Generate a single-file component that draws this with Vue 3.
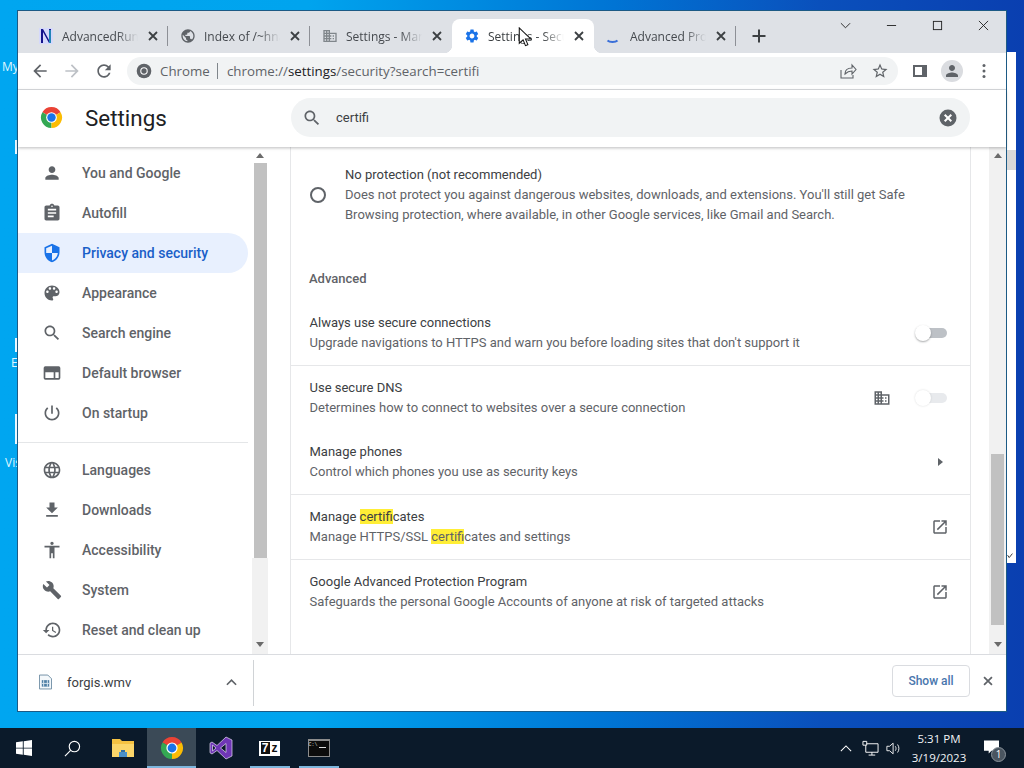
<template>
  <div class="desktop">
    <div class="desk-label label-my">My</div>
    <div class="desk-label label-e">E</div>
    <div class="desk-label label-vis">Vis</div>
    <div class="desk-mark mark-a"></div>
    <div class="desk-mark mark-b"></div>
    <div class="desk-mark mark-c"></div>
    <div class="back-window">
      <div class="back-thumb"></div>
      <svg class="back-check" viewBox="0 0 10 10"><path d="M2 4l2 3 4-5" /></svg>
    </div>

    <div class="window">
      <div class="tabstrip">
        <div class="tabs">
          <div
            v-for="(tab, i) in tabs"
            :key="i"
            :class="['tab', { 'tab--active': tab.active, 'tab--nosep': tab.nosep }]"
          >
            <svg v-if="tab.icon === 'n'" class="tab-icon" viewBox="0 0 16 16">
              <rect x="1" y="0" width="14" height="16" fill="#d5d9fb" />
              <path d="M3 15V1h2l6 11V1h2v14h-2L5 4v11z" fill="#14148c" />
              <path d="M12 2v13" stroke="#29b6c9" stroke-width="1.4" />
            </svg>
            <svg v-else-if="tab.icon === 'spin'" class="tab-icon" viewBox="0 0 16 16">
              <path d="M1.500 12.500c2 2 8 2 10 0" fill="none" stroke="#3a6fd8" stroke-width="2" />
            </svg>
            <svg v-else class="tab-icon" viewBox="0 0 24 24">
              <path :d="icons[tab.icon]" :fill="tab.color" />
            </svg>
            <span class="tab-text">{{ tab.title }}</span>
            <svg class="tab-close" viewBox="0 0 16 16"><path d="M4 4l8 8M12 4l-8 8" /></svg>
          </div>
        </div>
        <svg class="new-tab" viewBox="0 0 16 16"><path d="M8 1.500v13M1.500 8h13" /></svg>
        <div class="win-controls">
          <div class="win-btn"><svg viewBox="0 0 12 12"><path d="M1 3.500l5 5 5-5" /></svg></div>
          <div class="win-btn"><svg viewBox="0 0 12 12"><path d="M1 6h10" /></svg></div>
          <div class="win-btn"><svg viewBox="0 0 12 12"><rect x="1.500" y="1.500" width="9" height="9" /></svg></div>
          <div class="win-btn"><svg viewBox="0 0 12 12"><path d="M1 1l10 10M11 1L1 11" /></svg></div>
        </div>
      </div>

      <div class="toolbar">
        <div class="tool-btn"><svg viewBox="0 0 24 24"><path :d="icons.back" fill="#5f6368" /></svg></div>
        <div class="tool-btn"><svg viewBox="0 0 24 24"><path :d="icons.forward" fill="#bdc1c6" /></svg></div>
        <div class="tool-btn"><svg viewBox="0 0 24 24"><path :d="icons.reload" fill="#5f6368" /></svg></div>
        <div class="omnibox">
          <svg class="omni-chrome" viewBox="0 0 24 24">
            <circle cx="12" cy="12" r="11" fill="#5f6368" />
            <circle cx="12" cy="12" r="5.600" fill="#fff" />
            <circle cx="12" cy="12" r="4" fill="#5f6368" />
          </svg>
          <span class="omni-chip">Chrome</span>
          <span class="omni-sep"></span>
          <span class="omni-url">chrome://<b>settings</b>/security?search=certifi</span>
          <svg class="omni-share" viewBox="0 0 18 18">
            <path d="M2 8v8h12v-3M6 12c0-4 3-6 7-6V3l4 4.500L13 12V9c-3 0-5 1-7 3z" />
          </svg>
          <svg class="omni-star" viewBox="0 0 24 24"><path :d="icons.star" fill="#5f6368" /></svg>
        </div>
        <div class="tool-btn">
          <svg class="panel-icon" viewBox="0 0 16 16">
            <path d="M1 2h14v12H1zM3 4v8h7V4z" fill="#5f6368" fill-rule="evenodd" />
          </svg>
        </div>
        <div class="tool-btn">
          <div class="avatar">
            <svg viewBox="0 0 24 24"><path :d="icons.person" fill="#5f6368" /></svg>
          </div>
        </div>
        <div class="tool-btn">
          <svg viewBox="0 0 24 24">
            <circle cx="12" cy="5.500" r="1.800" fill="#5f6368" />
            <circle cx="12" cy="12" r="1.800" fill="#5f6368" />
            <circle cx="12" cy="18.500" r="1.800" fill="#5f6368" />
          </svg>
        </div>
      </div>

      <header class="settings-head">
        <div class="brand">
          <svg class="brand-logo" viewBox="0 0 24 24">
            <path v-for="p in chromeSectors" :key="p.d" :d="p.d" :fill="p.fill" />
            <circle cx="12" cy="12" r="5.600" fill="#fff" />
            <circle cx="12" cy="12" r="4.400" fill="#1a73e8" />
          </svg>
          <span class="brand-title">Settings</span>
        </div>
        <div class="search">
          <svg class="search-icon" viewBox="0 0 24 24"><path :d="icons.search" fill="#5f6368" /></svg>
          <span class="search-text">certifi</span>
          <svg class="search-clear" viewBox="0 0 18 18">
            <circle cx="9" cy="9" r="8.500" fill="#5f6368" />
            <path d="M5.700 5.700l6.600 6.600M12.300 5.700l-6.600 6.600" stroke="#fff" stroke-width="2" />
          </svg>
        </div>
      </header>

      <div class="body">
        <nav class="sidebar">
          <div class="nav-list">
            <template v-for="item in navItems" :key="item.label">
              <div v-if="item.divider" class="nav-divider"></div>
              <div :class="['nav-item', { 'nav-item--active': item.active }]">
                <svg class="nav-icon" viewBox="0 0 24 24">
                  <path
                    :d="icons[item.icon]"
                    :fill="item.active ? '#1a73e8' : '#5f6368'"
                    fill-rule="evenodd"
                  />
                </svg>
                <span>{{ item.label }}</span>
              </div>
            </template>
          </div>
          <div class="side-scroll">
            <svg class="arrow" viewBox="0 0 8 5"><path d="M4 0l4 5H0z" /></svg>
            <div class="side-thumb"></div>
            <svg class="arrow arrow--down" viewBox="0 0 8 5"><path d="M0 0h8L4 5z" /></svg>
          </div>
        </nav>

        <main class="content">
          <div class="card">
            <div class="radio-row">
              <div class="radio"></div>
              <div>
                <div class="row-title">No protection (not recommended)</div>
                <div class="row-sub">Does not protect you against dangerous websites, downloads, and extensions. You'll still get Safe</div>
                <div class="row-sub">Browsing protection, where available, in other Google services, like Gmail and Search.</div>
              </div>
            </div>
            <div class="section-label">Advanced</div>

            <div class="row row--line">
              <div class="row-body">
                <div class="row-title">Always use secure connections</div>
                <div class="row-sub">Upgrade navigations to HTTPS and warn you before loading sites that don't support it</div>
              </div>
              <div class="toggle"><span class="toggle-bar"></span><span class="toggle-knob"></span></div>
            </div>

            <div class="row">
              <div class="row-body">
                <div class="row-title">Use secure DNS</div>
                <div class="row-sub">Determines how to connect to websites over a secure connection</div>
              </div>
              <svg class="domain-icon" viewBox="0 0 24 24"><path :d="icons.domain" fill="#5f6368" /></svg>
              <div class="toggle toggle--off"><span class="toggle-bar"></span><span class="toggle-knob"></span></div>
            </div>

            <div class="row row--line">
              <div class="row-body">
                <div class="row-title">Manage phones</div>
                <div class="row-sub">Control which phones you use as security keys</div>
              </div>
              <svg class="row-arrow" viewBox="0 0 18 18"><path d="M7 5l5 4-5 4z" fill="#5f6368" /></svg>
            </div>

            <div class="row row--line">
              <div class="row-body">
                <div class="row-title">Manage <mark>certifi</mark>cates</div>
                <div class="row-sub">Manage HTTPS/SSL <mark>certifi</mark>cates and settings</div>
              </div>
              <svg class="row-arrow" viewBox="0 0 24 24"><path :d="icons.open" fill="#5f6368" /></svg>
            </div>

            <div class="row">
              <div class="row-body">
                <div class="row-title">Google Advanced Protection Program</div>
                <div class="row-sub">Safeguards the personal Google Accounts of anyone at risk of targeted attacks</div>
              </div>
              <svg class="row-arrow" viewBox="0 0 24 24"><path :d="icons.open" fill="#5f6368" /></svg>
            </div>
          </div>
          <div class="main-scroll">
            <svg class="arrow" viewBox="0 0 8 5"><path d="M4 0l4 5H0z" /></svg>
            <div class="main-thumb"></div>
            <svg class="arrow arrow--down" viewBox="0 0 8 5"><path d="M0 0h8L4 5z" /></svg>
          </div>
        </main>
      </div>

      <footer class="downloads">
        <div class="dl-item">
          <svg class="dl-file" viewBox="0 0 14 16">
            <path d="M.5.5h9l4 4v11H.5z" fill="#f4f8fb" stroke="#6d8ca3" />
            <rect x="3" y="6" width="8" height="7" fill="#4f7fa5" />
            <path d="M5 6v7M9 6v7M3 9.500h8" stroke="#dce9f2" />
          </svg>
          <span class="dl-name">forgis.wmv</span>
          <svg class="dl-chevron" viewBox="0 0 12 8"><path d="M1 7l5-5 5 5" /></svg>
        </div>
        <button class="show-all">Show all</button>
        <svg class="dl-close" viewBox="0 0 16 16"><path d="M3.500 3.500l9 9M12.500 3.500l-9 9" /></svg>
      </footer>
    </div>

    <div class="spacer"></div>

    <div class="taskbar">
      <div class="task-slot task-slot--narrow">
        <svg class="task-win" viewBox="0 0 16 16">
          <path d="M0 2.300l6.800-1v6.400H0zM7.700 1.200L16 0v7.700H7.700zM0 8.400h6.800v6.300L0 13.700zM7.700 8.400H16V16l-8.300-1.200z" fill="#fff" />
        </svg>
      </div>
      <div class="task-slot task-slot--narrow">
        <svg class="task-search" viewBox="0 0 18 18">
          <circle cx="11" cy="7" r="5.500" />
          <path d="M7 11l-6 6" />
        </svg>
      </div>
      <div class="task-slot task-slot--folder">
        <svg class="task-app" viewBox="0 0 24 24">
          <path d="M1 3h8l2 2h12v5H1z" fill="#f5c242" />
          <path d="M1 8h22v13H1z" fill="#fbd66a" />
          <path d="M8 21v-5h8v5z" fill="#4a90c8" />
          <path d="M10 16v-2h4v2z" fill="#2f6ea3" />
        </svg>
      </div>
      <div class="task-slot task-slot--active">
        <svg class="task-app" viewBox="0 0 24 24">
          <path v-for="p in chromeSectors" :key="p.d" :d="p.d" :fill="p.fill" />
          <circle cx="12" cy="12" r="5.600" fill="#fff" />
          <circle cx="12" cy="12" r="4.400" fill="#1a73e8" />
        </svg>
      </div>
      <div class="task-slot">
        <svg class="task-app" viewBox="0 0 24 24">
          <path d="M17 1l6 3v16l-6 3-9-8.500L3 18l-2-1.200V7.200L3 6l5 3.500zM3.500 9v6L7 12zM17 7.500L11.500 12l5.500 4.500z" fill="#6f36b5" stroke="#e6dcf5" stroke-width=".7" />
        </svg>
      </div>
      <div class="task-slot task-slot--open">
        <div class="seven-z"><span class="seven">7</span><span class="zed">z</span></div>
      </div>
      <div class="task-slot task-slot--open">
        <div class="cmd"><span class="cmd-top">C:\</span><span class="cmd-cursor"></span></div>
      </div>

      <div class="tray">
        <svg class="tray-chevron" viewBox="0 0 14 8"><path d="M1 7l6-6 6 6" /></svg>
        <svg class="tray-net" viewBox="0 0 18 16">
          <path d="M5 1H1v4h4zM5 3.500h12v9H4V5M10.500 12.500v3M7 15.500h7" />
        </svg>
        <svg class="tray-vol" viewBox="0 0 18 16">
          <path d="M1 5.500h3L8 2v12l-4-3.500H1zM10.500 5.500c1 1.500 1 3.500 0 5M13 3.500c2 2.500 2 6.500 0 9" />
        </svg>
        <div class="clock">
          <div>5:31 PM</div>
          <div>3/19/2023</div>
        </div>
        <div class="notify">
          <svg viewBox="0 0 16 14"><path d="M0 0h16v11H8l-3 3v-3H0z" fill="#fff" /></svg>
          <span class="notify-badge">1</span>
        </div>
      </div>
    </div>

    <svg class="cursor" viewBox="0 0 14 22">
      <path d="M1 1v16l4-3.500 2.500 6 2.500-1-2.500-6H13z" fill="#fff" stroke="#111" stroke-width="1.100" />
    </svg>
  </div>
</template>

<script setup>
const icons = {
  person: 'M12 12c2.210 0 4-1.790 4-4s-1.790-4-4-4-4 1.790-4 4 1.790 4 4 4zm0 2c-2.670 0-8 1.340-8 4v2h16v-2c0-2.660-5.330-4-8-4z',
  assignment: 'M19 3h-4.180C14.400 1.840 13.300 1 12 1c-1.300 0-2.400.84-2.820 2H5c-1.100 0-2 .9-2 2v14c0 1.100.9 2 2 2h14c1.100 0 2-.9 2-2V5c0-1.100-.9-2-2-2zm-7 0c.55 0 1 .45 1 1s-.45 1-1 1-1-.45-1-1 .45-1 1-1zm2 14H7v-2h7v2zm3-4H7v-2h10v2zm0-4H7V7h10v2z',
  shield: 'M12 1L3 5v6c0 5.550 3.840 10.740 9 12 5.160-1.260 9-6.450 9-12V5l-9-4zm0 10.990h7c-.53 4.120-3.280 7.790-7 8.940V12H5V6.300l7-3.110v8.800z',
  palette: 'M12 3c-4.970 0-9 4.030-9 9s4.030 9 9 9c.83 0 1.500-.67 1.500-1.500 0-.39-.15-.74-.39-1.010-.23-.26-.38-.61-.38-.99 0-.83.67-1.500 1.500-1.500H16c2.760 0 5-2.240 5-5 0-4.420-4.030-8-9-8zm-5.500 9c-.83 0-1.500-.67-1.500-1.500S5.670 9 6.500 9 8 9.670 8 10.500 7.330 12 6.500 12zm3-4C8.670 8 8 7.330 8 6.500S8.670 5 9.500 5s1.500.67 1.500 1.500S10.330 8 9.500 8zm5 0c-.83 0-1.500-.67-1.500-1.500S13.670 5 14.500 5s1.500.67 1.500 1.500S15.330 8 14.500 8zm3 4c-.83 0-1.500-.67-1.500-1.500S16.670 9 17.500 9s1.500.67 1.500 1.500-.67 1.500-1.500 1.500z',
  search: 'M15.500 14h-.79l-.28-.27C15.410 12.590 16 11.110 16 9.500 16 5.910 13.090 3 9.500 3S3 5.910 3 9.500 5.910 16 9.500 16c1.610 0 3.090-.59 4.230-1.570l.27.28v.79l5 4.990L20.490 19l-4.990-5zm-6 0C7.010 14 5 11.990 5 9.500S7.010 5 9.500 5 14 7.010 14 9.500 11.990 14 9.500 14z',
  browser: 'M20 4H4a2 2 0 0 0-2 2v12a2 2 0 0 0 2 2h16a2 2 0 0 0 2-2V6a2 2 0 0 0-2-2zM4 18v-7h10v7H4zm12 0v-7h4v7h-4z',
  power: 'M13 3h-2v10h2V3zm4.830 2.170l-1.420 1.420C17.990 7.860 19 9.810 19 12c0 3.870-3.130 7-7 7s-7-3.130-7-7c0-2.190 1.010-4.140 2.580-5.420L6.170 5.170C4.230 6.820 3 9.260 3 12c0 4.970 4.030 9 9 9s9-4.030 9-9c0-2.740-1.230-5.180-3.170-6.830z',
  language: 'M11.990 2C6.470 2 2 6.480 2 12s4.470 10 9.990 10C17.520 22 22 17.520 22 12S17.520 2 11.990 2zm6.930 6h-2.950c-.32-1.250-.78-2.450-1.380-3.560 1.840.63 3.370 1.910 4.330 3.560zM12 4.040c.83 1.200 1.480 2.530 1.910 3.960h-3.820c.43-1.430 1.080-2.760 1.910-3.960zM4.260 14C4.100 13.360 4 12.690 4 12s.1-1.360.26-2h3.380c-.08.66-.14 1.320-.14 2 0 .68.06 1.340.14 2H4.260zm.82 2h2.950c.32 1.250.78 2.450 1.380 3.560-1.840-.63-3.370-1.900-4.330-3.560zm2.950-8H5.080c.96-1.660 2.490-2.930 4.330-3.560C8.810 5.550 8.350 6.750 8.030 8zM12 19.960c-.83-1.200-1.480-2.530-1.910-3.960h3.820c-.43 1.430-1.080 2.760-1.910 3.960zM14.340 14H9.660c-.09-.66-.16-1.320-.16-2 0-.68.07-1.350.16-2h4.680c.09.65.16 1.320.16 2 0 .68-.07 1.340-.16 2zm.25 5.560c.6-1.110 1.060-2.310 1.380-3.560h2.950c-.96 1.650-2.490 2.930-4.330 3.560zM16.360 14c.08-.66.14-1.320.14-2 0-.68-.06-1.340-.14-2h3.380c.16.64.26 1.310.26 2s-.1 1.360-.26 2h-3.380z',
  download: 'M19 9h-4V3H9v6H5l7 7 7-7zM5 18v2h14v-2H5z',
  accessibility: 'M12 2c1.100 0 2 .9 2 2s-.9 2-2 2-2-.9-2-2 .9-2 2-2zm9 7h-6v13h-2v-6h-2v6H9V9H3V7h18v2z',
  build: 'M22.700 19l-9.100-9.100c.9-2.300.4-5-1.500-6.900-2-2-5-2.400-7.400-1.300L9 6 6 9 1.600 4.700C.4 7.100.9 10.100 2.900 12.100c1.900 1.900 4.600 2.400 6.900 1.500l9.100 9.100c.4.4 1 .4 1.400 0l2.300-2.300c.5-.4.5-1.100.1-1.400z',
  restore: 'M13 3c-4.970 0-9 4.030-9 9H1l3.890 3.890.07.14L9 12H6c0-3.870 3.130-7 7-7s7 3.130 7 7-3.130 7-7 7c-1.930 0-3.680-.79-4.940-2.060l-1.420 1.420C8.270 19.990 10.510 21 13 21c4.970 0 9-4.030 9-9s-4.030-9-9-9zm-1 5v5l4.280 2.540.72-1.210-3.500-2.080V8H12z',
  open: 'M19 19H5V5h7V3H5c-1.110 0-2 .9-2 2v14c0 1.100.89 2 2 2h14c1.100 0 2-.9 2-2v-7h-2v7zM14 3v2h3.590l-9.830 9.830 1.410 1.410L19 6.410V10h2V3h-7z',
  domain: 'M12 7V3H2v18h20V7H12zM6 19H4v-2h2v2zm0-4H4v-2h2v2zm0-4H4V9h2v2zm0-4H4V5h2v2zm4 12H8v-2h2v2zm0-4H8v-2h2v2zm0-4H8V9h2v2zm0-4H8V5h2v2zm10 12h-8v-2h2v-2h-2v-2h2v-2h-2V9h8v10zm-2-8h-2v2h2v-2zm0 4h-2v2h2v-2z',
  globe: 'M12 2C6.480 2 2 6.480 2 12s4.480 10 10 10 10-4.480 10-10S17.520 2 12 2zm-1 17.930c-3.950-.49-7-3.850-7-7.930 0-.62.08-1.210.21-1.790L9 15v1c0 1.100.9 2 2 2v1.930zm6.900-2.540c-.26-.81-1-1.390-1.900-1.390h-1v-3c0-.55-.45-1-1-1H8v-2h2c.55 0 1-.45 1-1V7h2c1.100 0 2-.9 2-2v-.41c2.930 1.190 5 4.060 5 7.410 0 2.080-.8 3.970-2.100 5.390z',
  gear: 'M19.140 12.940c.04-.3.06-.61.06-.94 0-.32-.02-.64-.07-.94l2.030-1.580c.18-.14.23-.41.12-.61l-1.920-3.320c-.12-.22-.37-.29-.59-.22l-2.390.96c-.5-.38-1.030-.7-1.620-.94l-.36-2.540c-.04-.24-.24-.41-.48-.41h-3.840c-.24 0-.43.17-.47.41l-.36 2.540c-.59.24-1.130.57-1.620.94l-2.390-.96c-.22-.08-.47 0-.59.22L2.740 8.870c-.12.21-.08.47.12.61l2.030 1.580c-.05.3-.09.63-.09.94s.02.64.07.94l-2.030 1.580c-.18.14-.23.41-.12.61l1.920 3.320c.12.22.37.29.59.22l2.390-.96c.5.38 1.030.7 1.620.94l.36 2.540c.05.24.24.41.48.41h3.840c.24 0 .44-.17.47-.41l.36-2.540c.59-.24 1.130-.56 1.620-.94l2.390.96c.22.08.47 0 .59-.22l1.920-3.320c.12-.22.07-.47-.12-.61l-2.010-1.580zM12 15.600c-1.980 0-3.600-1.620-3.600-3.600s1.620-3.600 3.600-3.600 3.600 1.620 3.600 3.600-1.620 3.600-3.600 3.600z',
  back: 'M20 11H7.830l5.590-5.590L12 4l-8 8 8 8 1.410-1.410L7.830 13H20v-2z',
  forward: 'M4 11h12.170l-5.590-5.590L12 4l8 8-8 8-1.410-1.410L16.170 13H4v-2z',
  reload: 'M17.650 6.350C16.200 4.900 14.210 4 12 4c-4.420 0-7.990 3.580-7.990 8s3.570 8 7.990 8c3.730 0 6.840-2.550 7.730-6h-2.080c-.82 2.330-3.040 4-5.650 4-3.310 0-6-2.690-6-6s2.690-6 6-6c1.660 0 3.140.69 4.220 1.780L13 11h7V4l-2.350 2.350z',
  star: 'M22 9.240l-7.190-.62L12 2 9.190 8.630 2 9.240l5.460 4.730L5.820 21 12 17.270 18.180 21l-1.630-7.030L22 9.240zM12 15.400l-3.760 2.270 1-4.280-3.320-2.880 4.380-.38L12 6.100l1.710 4.040 4.380.38-3.320 2.880 1 4.280L12 15.400z'
}

const chromeSectors = [
  { d: 'M12 12L2.470 6.500A11 11 0 0 1 21.530 6.500z', fill: '#ea4335' },
  { d: 'M12 12L2.470 6.500A11 11 0 0 0 12 23z', fill: '#34a853' },
  { d: 'M12 12L21.530 6.500A11 11 0 0 1 12 23z', fill: '#fbbc04' }
]

const tabs = [
  { title: 'AdvancedRun', icon: 'n' },
  { title: 'Index of /~hna', icon: 'globe', color: '#5f6368' },
  { title: 'Settings - Man', icon: 'domain', color: '#80868b', nosep: true },
  { title: 'Settings - Secu', icon: 'gear', color: '#1a73e8', active: true, nosep: true },
  { title: 'Advanced Prot', icon: 'spin' }
]

const navItems = [
  { label: 'You and Google', icon: 'person' },
  { label: 'Autofill', icon: 'assignment' },
  { label: 'Privacy and security', icon: 'shield', active: true },
  { label: 'Appearance', icon: 'palette' },
  { label: 'Search engine', icon: 'search' },
  { label: 'Default browser', icon: 'browser' },
  { label: 'On startup', icon: 'power' },
  { label: 'Languages', icon: 'language', divider: true },
  { label: 'Downloads', icon: 'download' },
  { label: 'Accessibility', icon: 'accessibility' },
  { label: 'System', icon: 'build' },
  { label: 'Reset and clean up', icon: 'restore' }
]
</script>

<style>
html, body { margin: 0; padding: 0; overflow: hidden; }
</style>

<style scoped>
.desktop {
  position: relative;
  width: 1024px; height: 768px; overflow: hidden;
  display: flex; flex-direction: column;
  background: linear-gradient(90deg, #00a6f0 0%, #00a4ee 30%, #0074d4 60%, #0a50bc 80%, #0a3fb0 100%);
  font-family: Roboto, "Liberation Sans", sans-serif;
  color: #5f6368;
}
.desk-label { position: absolute; color: #dff6ff; font: 12px "Open Sans", sans-serif; }
.label-my { left: 2px; top: 58px; }
.label-e { left: 11px; top: 354px; }
.label-vis { left: 5px; top: 454px; }
.desk-mark { position: absolute; background: #eaf8ff; width: 3px; left: 15px; }
.mark-a { top: 140px; height: 14px; }
.mark-b { top: 338px; height: 14px; }
.mark-c { top: 414px; height: 30px; }

.back-window {
  position: absolute; left: 1006px; top: 52px; width: 10px; height: 511px;
  background: #fff;
}
.back-thumb { margin-top: 98px; height: 20px; background: #d9d9d9; }
.back-check {
  position: absolute; left: 0; bottom: 3px; width: 8px; height: 8px;
  fill: none; stroke: #333; stroke-width: 1.2;
}

.window {
  position: absolute; left: 17px; top: 10px;
  width: 988px; height: 700px;
  border: 1px solid #1c5a85;
  background: #fff;
  display: flex; flex-direction: column;
}

/* tab strip */
.tabstrip {
  height: 42px; flex-shrink: 0;
  background: #dee1e6;
  display: flex; align-items: flex-start;
  padding-left: 8px;
}
.tabs { display: flex; margin-top: 8px; }
.tab {
  position: relative;
  width: 142px; height: 34px;
  box-sizing: border-box;
  padding: 0 7px 0 12px;
  display: flex; align-items: center;
  font: 12px "Open Sans", sans-serif;
  color: #45494e;
}
.tab::after {
  content: ""; position: absolute; right: 0; top: 7px;
  width: 1px; height: 20px; background: #8d9096;
}
.tab--nosep::after { display: none; }
.tab--active { background: #fff; border-radius: 8px 8px 0 0; color: #3c4043; }
.tab--active::before,
.tab--active::after {
  content: ""; display: block; position: absolute; top: auto; bottom: 0;
  width: 8px; height: 8px; background: radial-gradient(circle at 0 0, transparent 8px, #fff 8.500px);
}
.tab--active::before { left: -8px; }
.tab--active::after { right: -8px; background: radial-gradient(circle at 100% 0, transparent 8px, #fff 8.500px); }
.tab-icon { width: 16px; height: 16px; flex-shrink: 0; margin-right: 8px; }
.tab-text {
  width: 76px; flex-shrink: 0; white-space: nowrap;
  -webkit-mask-image: linear-gradient(90deg, #000 72%, transparent 100%);
  mask-image: linear-gradient(90deg, #000 72%, transparent 100%);
}
.tab-close {
  width: 16px; height: 16px; flex-shrink: 0; margin-left: 7px;
  fill: none; stroke: #3c4043; stroke-width: 1.800;
}
.new-tab {
  width: 16px; height: 16px; margin: 17px 0 0 15px; flex-shrink: 0;
  fill: none; stroke: #3c4043; stroke-width: 2;
}
.win-controls { margin-left: auto; display: flex; }
.win-btn { width: 46px; height: 28px; display: flex; align-items: center; justify-content: center; }
.win-btn svg { width: 11px; height: 11px; fill: none; stroke: #222; stroke-width: 1; }

/* toolbar */
.toolbar {
  height: 36px; flex-shrink: 0;
  box-sizing: content-box;
  display: flex; align-items: center;
  padding-left: 6px;
  border-bottom: 1px solid #dadce0;
}
.tool-btn { width: 32px; height: 32px; display: flex; align-items: center; justify-content: center; flex-shrink: 0; }
.tool-btn svg { width: 20px; height: 20px; }
.tool-btn .panel-icon { width: 16px; height: 16px; }
.avatar {
  width: 22px; height: 22px; border-radius: 50%; background: #dadce0;
  display: flex; align-items: center; justify-content: center;
}
.avatar svg { width: 18px; height: 18px; }
.omnibox {
  width: 771px; height: 28px; margin: 0 6px 0 7px; flex-shrink: 0;
  box-sizing: border-box;
  background: #f1f3f4; border-radius: 14px;
  display: flex; align-items: center;
  padding: 0 9px;
  font: 13.300px "Open Sans", sans-serif;
  color: #5f6368;
}
.omni-chrome { width: 16px; height: 16px; margin-right: 8px; flex-shrink: 0; }
.omni-chip { width: 49px; flex-shrink: 0; white-space: nowrap; }
.omni-sep { width: 1px; height: 16px; background: #80868b; margin: 0 9px 0 8px; flex-shrink: 0; }
.omni-url { white-space: nowrap; flex: 1; }
.omni-url b { font-weight: 400; color: #202124; }
.omni-share { width: 18px; height: 18px; fill: none; stroke: #5f6368; stroke-width: 1.100; flex-shrink: 0; }
.omni-star { width: 18px; height: 18px; margin-left: 14px; flex-shrink: 0; }

/* settings header */
.settings-head {
  position: relative; z-index: 2;
  height: 57px; flex-shrink: 0; box-sizing: border-box;
  padding-bottom: 2px;
  display: flex; align-items: center;
  box-shadow: 0 1px 3px rgba(60, 64, 67, .35);
}
.brand { width: 273px; flex-shrink: 0; display: flex; align-items: center; padding-left: 22px; box-sizing: border-box; }
.brand-logo { width: 23px; height: 23px; flex-shrink: 0; }
.brand-title { margin-left: 22px; font-size: 22.400px; color: #202124; }
.search {
  width: 679px; height: 39px; box-sizing: border-box;
  background: #f1f3f4; border-radius: 20px;
  display: flex; align-items: center;
  padding: 0 13px 0 11px;
  font-size: 13px; color: #3c4043;
}
.search-icon { width: 20px; height: 20px; flex-shrink: 0; }
.search-text { flex: 1; margin-left: 14px; }
.search-clear { width: 18px; height: 18px; flex-shrink: 0; }

/* body */
.body { height: 507px; flex-shrink: 0; display: flex; overflow: hidden; }
.sidebar { width: 272px; flex-shrink: 0; display: flex; }
.nav-list { width: 234px; flex-shrink: 0; padding-top: 6px; box-sizing: border-box; }
.nav-item {
  width: 230px; height: 40px; box-sizing: border-box;
  display: flex; align-items: center;
  padding-left: 24px;
  font-size: 14px; font-weight: 500; color: #5f6368;
  border-radius: 0 20px 20px 0;
}
.nav-item--active { background: #e8f0fe; color: #1a5fc8; }
.nav-icon { width: 20px; height: 20px; margin-right: 20px; flex-shrink: 0; }
.nav-divider { width: 230px; height: 1px; background: #e4e6e8; margin: 9px 0 7px; }

.side-scroll {
  width: 16px; height: 507px; flex-shrink: 0;
  background: linear-gradient(#fff 411px, #f1f1f1 411px);
  display: flex; flex-direction: column; align-items: center;
}
.arrow { width: 8px; height: 5px; flex-shrink: 0; margin-top: 6px; fill: #6b6b6b; }
.arrow--down { margin-top: 0; margin-bottom: 7px; }
.side-thumb { width: 13px; height: 395px; margin-top: 5px; background: #c1c1c1; }
.side-scroll .arrow--down { margin-top: auto; }

.content { flex: 1; min-width: 0; display: flex; justify-content: space-between; }
.card {
  width: 681px; height: 507px; box-sizing: border-box; flex-shrink: 0;
  border-left: 1px solid #e6e7e9; border-right: 1px solid #e6e7e9;
  padding-top: 18px;
}
.radio-row { display: flex; align-items: center; padding-left: 18px; gap: 19px; }
.radio {
  width: 16px; height: 16px; border-radius: 50%; flex-shrink: 0;
  border: 2px solid #5f6368; box-sizing: border-box; margin-left: 1px;
}
.row-title { font-size: 13px; line-height: 20px; color: #3c4043; }
.row-sub { font-size: 13px; line-height: 20px; color: #5f6368; }
.section-label {
  margin: 44px 0 12px 18px;
  font-size: 13px; line-height: 20px; font-weight: 500; color: #5f6368;
}
.row {
  display: flex; align-items: center;
  padding: 12px 21px 12px 18.500px;
}
.row--line { border-bottom: 1px solid #e6e7e9; }
.row-body { flex: 1; min-width: 0; }
.row-arrow { width: 18px; height: 18px; flex-shrink: 0; }
.domain-icon { width: 18px; height: 18px; flex-shrink: 0; margin-right: 24px; }
mark { background: #ffee36; color: inherit; }

.toggle { position: relative; width: 32px; height: 16px; flex-shrink: 0; margin-right: 2px; }
.toggle-bar {
  position: absolute; left: 2px; right: 0; top: 3px; height: 10px;
  border-radius: 5px; background: #bdc1c6;
}
.toggle-knob {
  position: absolute; left: 0; top: 0; width: 16px; height: 16px; border-radius: 50%;
  background: #fff; box-shadow: 0 1px 2px rgba(60, 64, 67, .45);
}
.toggle--off .toggle-bar { background: #e8eaed; }
.toggle--off .toggle-knob { box-shadow: 0 0 2px rgba(60, 64, 67, .2); }

.main-scroll {
  width: 17px; flex-shrink: 0; background: #f1f1f1;
  display: flex; flex-direction: column; align-items: center;
}
.main-thumb { width: 13px; height: 171px; margin-top: auto; margin-bottom: 17px; background: #c1c1c1; }

/* downloads bar */
.downloads {
  height: 56px; flex-shrink: 0;
  border-top: 1px solid #dadce0;
  display: flex; align-items: center;
  position: relative; z-index: 1;
}
.dl-item {
  width: 236px; height: 46px; flex-shrink: 0; box-sizing: border-box;
  display: flex; align-items: center;
  padding: 0 0 2px 21px;
  border-right: 1px solid #d0d3d6;
}
.dl-file { width: 13px; height: 16px; flex-shrink: 0; }
.dl-name { margin-left: 15px; font-size: 13px; color: #3c4043; width: 159px; }
.dl-chevron { width: 11px; height: 8px; fill: none; stroke: #5f6368; stroke-width: 1.800; }
.show-all {
  margin: 0 0 4px auto; width: 78px; height: 32px;
  background: #fff; border: 1px solid #dadce0; border-radius: 4px;
  font: 500 12px Roboto, sans-serif; color: #4a76ad;
  padding: 0;
}
.dl-close {
  width: 14px; height: 14px; margin: 0 11px 4px 11px; flex-shrink: 0;
  fill: none; stroke: #5f6368; stroke-width: 2;
}

.spacer { flex: 1; }

/* taskbar */
.taskbar {
  height: 40px; flex-shrink: 0;
  background: #0b1a2a;
  display: flex; align-items: stretch;
}
.task-slot {
  position: relative;
  width: 49px; flex-shrink: 0; box-sizing: border-box;
  display: flex; align-items: center; justify-content: center;
}
.task-slot--narrow { width: 48px; }
.task-slot--folder { margin-left: 2px; width: 49px; }
.task-slot--active { background: #3b4a57; }
.task-slot--open::after,
.task-slot--active::after {
  content: ""; position: absolute; left: 5px; right: 4px; bottom: 0; height: 2px;
  background: #7db6dd;
}
.task-slot--active::after { left: 0; right: 0; }
.task-win { width: 16px; height: 16px; }
.task-search { width: 17px; height: 17px; fill: none; stroke: #fff; stroke-width: 1.200; }
.task-app { width: 24px; height: 24px; }
.seven-z {
  width: 21px; height: 15px; background: #fff;
  display: flex; align-items: center; justify-content: center; gap: 1px;
  font: 700 12px "Liberation Sans", sans-serif;
}
.seven { background: #111; color: #fff; width: 9px; line-height: 12px; text-align: center; }
.zed { color: #111; width: 8px; line-height: 12px; text-align: center; }
.cmd {
  width: 22px; height: 18px; box-sizing: border-box;
  background: #0c0c0c; border: 1px solid #8c8c8c; border-top-width: 2px;
  display: flex; align-items: flex-start; padding-top: 1px; gap: 1px;
}
.cmd-top { font: 5px "Liberation Mono", monospace; color: #ddd; line-height: 6px; }
.cmd-cursor { width: 7px; height: 1px; background: #ddd; margin-top: 5px; }

.tray { margin-left: auto; display: flex; align-items: center; color: #fff; }
.tray-chevron { width: 12px; height: 7px; fill: none; stroke: #fff; stroke-width: 1.200; margin-right: 10px; }
.tray-net { width: 17px; height: 16px; fill: none; stroke: #fff; stroke-width: 1; margin-right: 7px; }
.tray-vol { width: 16px; height: 15px; fill: none; stroke: #fff; stroke-width: 1; margin-right: 6px; }
.clock { width: 62px; text-align: center; font: 11.500px/19px "Open Sans", sans-serif; color: #f2f4f6; white-space: nowrap; }
.notify { position: relative; width: 22px; height: 24px; margin: 0 18px 0 14px; }
.notify svg { position: absolute; left: 0; top: 4px; width: 15px; height: 14px; }
.notify-badge {
  position: absolute; left: 7px; top: 11px;
  width: 15px; height: 15px; border-radius: 50%;
  background: #4a5560; border: 1px solid #8a939b; box-sizing: border-box;
  font: 10px/13px "Open Sans", sans-serif; text-align: center; color: #fff;
}

.cursor { position: absolute; left: 518px; top: 27px; width: 14px; height: 21px; z-index: 5; }
</style>
